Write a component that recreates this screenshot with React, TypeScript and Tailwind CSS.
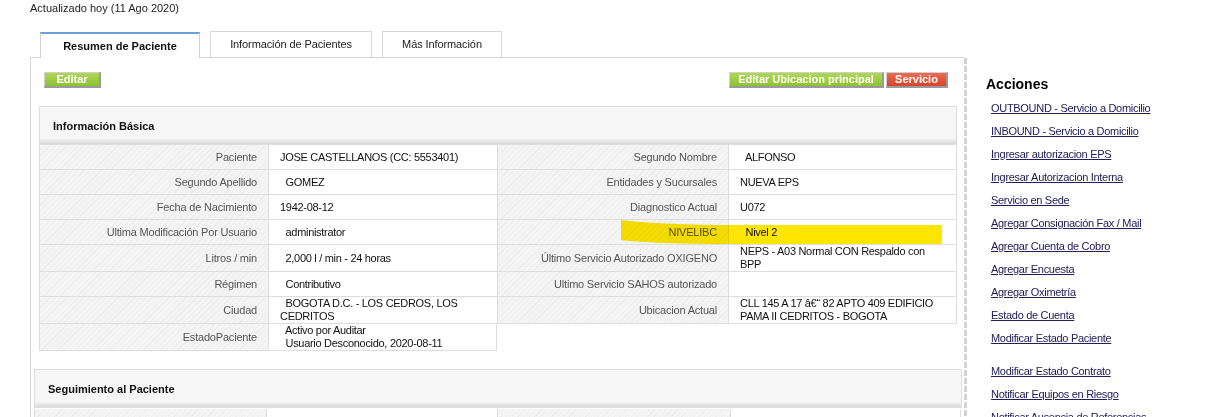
import type { ReactNode } from "react";

type Row = { l1: string; v1: ReactNode; l2?: string; v2?: ReactNode };

const sp = "\u00a0 ";

const basic: Row[] = [
  { l1: "Paciente", v1: "JOSE CASTELLANOS (CC: 5553401)", l2: "Segundo Nombre", v2: sp + "ALFONSO" },
  { l1: "Segundo Apellido", v1: sp + "GOMEZ", l2: "Entidades y Sucursales", v2: "NUEVA EPS" },
  { l1: "Fecha de Nacimiento", v1: "1942-08-12", l2: "Diagnostico Actual", v2: "U072" },
  { l1: "Ultima Modificación Por Usuario", v1: sp + "administrator", l2: "NIVELIBC", v2: sp + "Nivel 2" },
  { l1: "Litros / min", v1: sp + "2,000 l / min - 24 horas", l2: "Último Servicio Autorizado OXIGENO", v2: "NEPS - A03 Normal CON Respaldo con BPP" },
  { l1: "Régimen", v1: sp + "Contributivo", l2: "Ultimo Servicio SAHOS autorizado", v2: "" },
  { l1: "Ciudad", v1: sp + "BOGOTA D.C. - LOS CEDROS, LOS CEDRITOS", l2: "Ubicacion Actual", v2: "CLL 145 A 17 â€\u201c 82 APTO 409 EDIFICIO PAMA II CEDRITOS - BOGOTA" },
  {
    l1: "EstadoPaciente",
    v1: (
      <>
        {sp}Activo por Auditar
        <br />
        {sp}Usuario Desconocido, 2020-08-11
      </>
    ),
  },
];

const acciones = [
  "OUTBOUND - Servicio a Domicilio",
  "INBOUND - Servicio a Domicilio",
  "Ingresar autorizacion EPS",
  "Ingresar Autorizacion Interna",
  "Servicio en Sede",
  "Agregar Consignación Fax / Mail",
  "Agregar Cuenta de Cobro",
  "Agregar Encuesta",
  "Agregar Oximetría",
  "Estado de Cuenta",
  "Modificar Estado Paciente",
];

const acciones2 = ["Modificar Estado Contrato", "Notificar Equipos en Riesgo", "Notificar Ausencia de Referencias"];

const labelBg =
  "bg-[repeating-linear-gradient(135deg,#f4f4f4_0px,#f4f4f4_3px,#eeeeee_3px,#eeeeee_4px)]";

function Label({ children, w }: { children: ReactNode; w: string }) {
  return (
    <div className={`${w} ${labelBg} flex min-h-[25px] shrink-0 items-center justify-end border-b border-l border-[#dedede] pr-[11px] text-right tracking-[-0.2px] text-[#555]`}>
      {children}
    </div>
  );
}

function Value({ children, w, last }: { children: ReactNode; w: string; last?: boolean }) {
  return (
    <div className={`${w} flex min-h-[25px] shrink-0 items-center border-b border-l border-[#dedede] bg-white pl-[11px] pr-[13px] tracking-[-0.3px] text-[#111] ${last ? "border-r" : ""}`}>
      <div>{children}</div>
    </div>
  );
}

function SectionHeader({ title }: { title: string }) {
  return (
    <div className="border border-b-0 border-[#dedede] bg-[#f6f6f6]">
      <div className="flex h-[32px] items-center pl-[13px] pt-[6px] text-[11px] font-bold text-[#111]">{title}</div>
      <div className="h-[5px] bg-[linear-gradient(to_bottom,#f2f2f2,#d9d9d9)]" />
    </div>
  );
}

function GreenBtn({ children, w }: { children: ReactNode; w: string }) {
  return (
    <div className={`${w} flex h-[16px] items-center justify-center border border-[#cfcfcf] border-r-2 border-b-2 border-r-[#9a9a9a] border-b-[#9a9a9a] bg-[linear-gradient(to_bottom,#afd855,#8dc133)] text-[11px] font-bold leading-none text-white`}>
      {children}
    </div>
  );
}

export default function App() {
  return (
    <div className="relative h-[417px] w-[1212px] overflow-hidden bg-white font-['Liberation_Sans',Arial,sans-serif] text-[11px] leading-[13px]">
      <div className="pl-[30px] pt-[2px] text-[#222]">Actualizado hoy (11 Ago 2020)</div>

      {/* tabs */}
      <div className="ml-[30px] flex h-[43px] w-[934px] items-end gap-[10px] border-b border-[#d4d4d4] pl-[10px]">
        <div className="relative -mb-px flex h-[26px] w-[160px] items-center justify-center border-x border-t-2 border-[#d0d0d0] border-t-[#6a9fd8] bg-white pt-[1px] font-bold text-[#111]">
          Resumen de Paciente
        </div>
        <div className="flex h-[26px] w-[162px] items-center justify-center border-x border-t border-[#d8d8d8] bg-white tracking-[-0.1px] text-[#222]">
          Información de Pacientes
        </div>
        <div className="flex h-[26px] w-[120px] items-center justify-center border-x border-t border-[#d8d8d8] bg-white tracking-[-0.1px] text-[#222]">
          Más Información
        </div>
      </div>

      <div className="flex">
        {/* main panel */}
        <div className="w-[964px] shrink-0 pl-[30px]">
          <div className="h-[360px] border-l border-[#d4d4d4] pl-[8px] pr-[7px] pt-[14px]">
            <div className="flex items-start justify-between pl-[5px] pr-[9px]">
              <GreenBtn w="w-[57px]">Editar</GreenBtn>
              <div className="flex gap-[2px]">
                <GreenBtn w="w-[155px]">Editar Ubicacion principal</GreenBtn>
                <div className="flex h-[16px] w-[62px] items-center justify-center border border-[#cfcfcf] border-r-2 border-b-2 border-r-[#9a9a9a] border-b-[#9a9a9a] bg-[linear-gradient(to_bottom,#ee6b52,#d9432c)] text-[11px] font-bold leading-none text-white">
                  Servicio
                </div>
              </div>
            </div>

            <div className="mt-[18px] w-[918px]">
              <SectionHeader title="Información Básica" />
              <div className="relative border-t border-[#dedede]">
                {basic.map((r) => (
                  <div key={r.l1} className="flex">
                    <Label w="w-[229px]">{r.l1}</Label>
                    <Value w="w-[229px]" last={!r.l2}>{r.v1}</Value>
                    {r.l2 && (
                      <>
                        <Label w="w-[231px]">{r.l2}</Label>
                        <Value w="w-[229px]" last>{r.v2}</Value>
                      </>
                    )}
                  </div>
                ))}
                {/* highlighter mark */}
                <svg className="pointer-events-none absolute left-[581px] top-[74px] mix-blend-multiply" width="324" height="27" viewBox="0 0 324 27">
                  <path d="M1 1 Q 30 5 95 6 L 322 6 L 322 25 L 110 25 Q 35 25 1 21 Z" fill="#ffe600" />
                </svg>
              </div>
            </div>

            <div className="-ml-[5px] mt-[18px] w-[928px]">
              <SectionHeader title="Seguimiento al Paciente" />
              <div className="border-t border-[#dedede] pt-px">
                <div className="flex">
                  <Label w="w-[232px]">Fecha de Contabilidad SAP</Label>
                  <Value w="w-[231px]">{""}</Value>
                  <Label w="w-[233px]">Generado de Contabilidad</Label>
                  <Value w="w-[231px]" last>{""}</Value>
                </div>
              </div>
            </div>
          </div>
        </div>

        {/* dashed divider */}
        <div className="h-[360px] w-[3px] shrink-0 bg-[repeating-linear-gradient(to_bottom,#d2d2d2_0px,#d2d2d2_6px,transparent_6px,transparent_8px)]" />

        {/* sidebar */}
        <div className="flex-1 pl-[19px] pt-[18px]">
          <div className="text-[14px] font-bold leading-[17px] text-black">Acciones</div>
          <div className="mt-[9px] flex flex-col gap-[10px] pl-[5px] tracking-[-0.3px]">
            {acciones.map((a) => (
              <a key={a} className="text-[#20205a] underline">{a}</a>
            ))}
            <div className="h-[0px]" />
            {acciones2.map((a) => (
              <a key={a} className="text-[#20205a] underline">{a}</a>
            ))}
          </div>
        </div>
      </div>
    </div>
  );
}
